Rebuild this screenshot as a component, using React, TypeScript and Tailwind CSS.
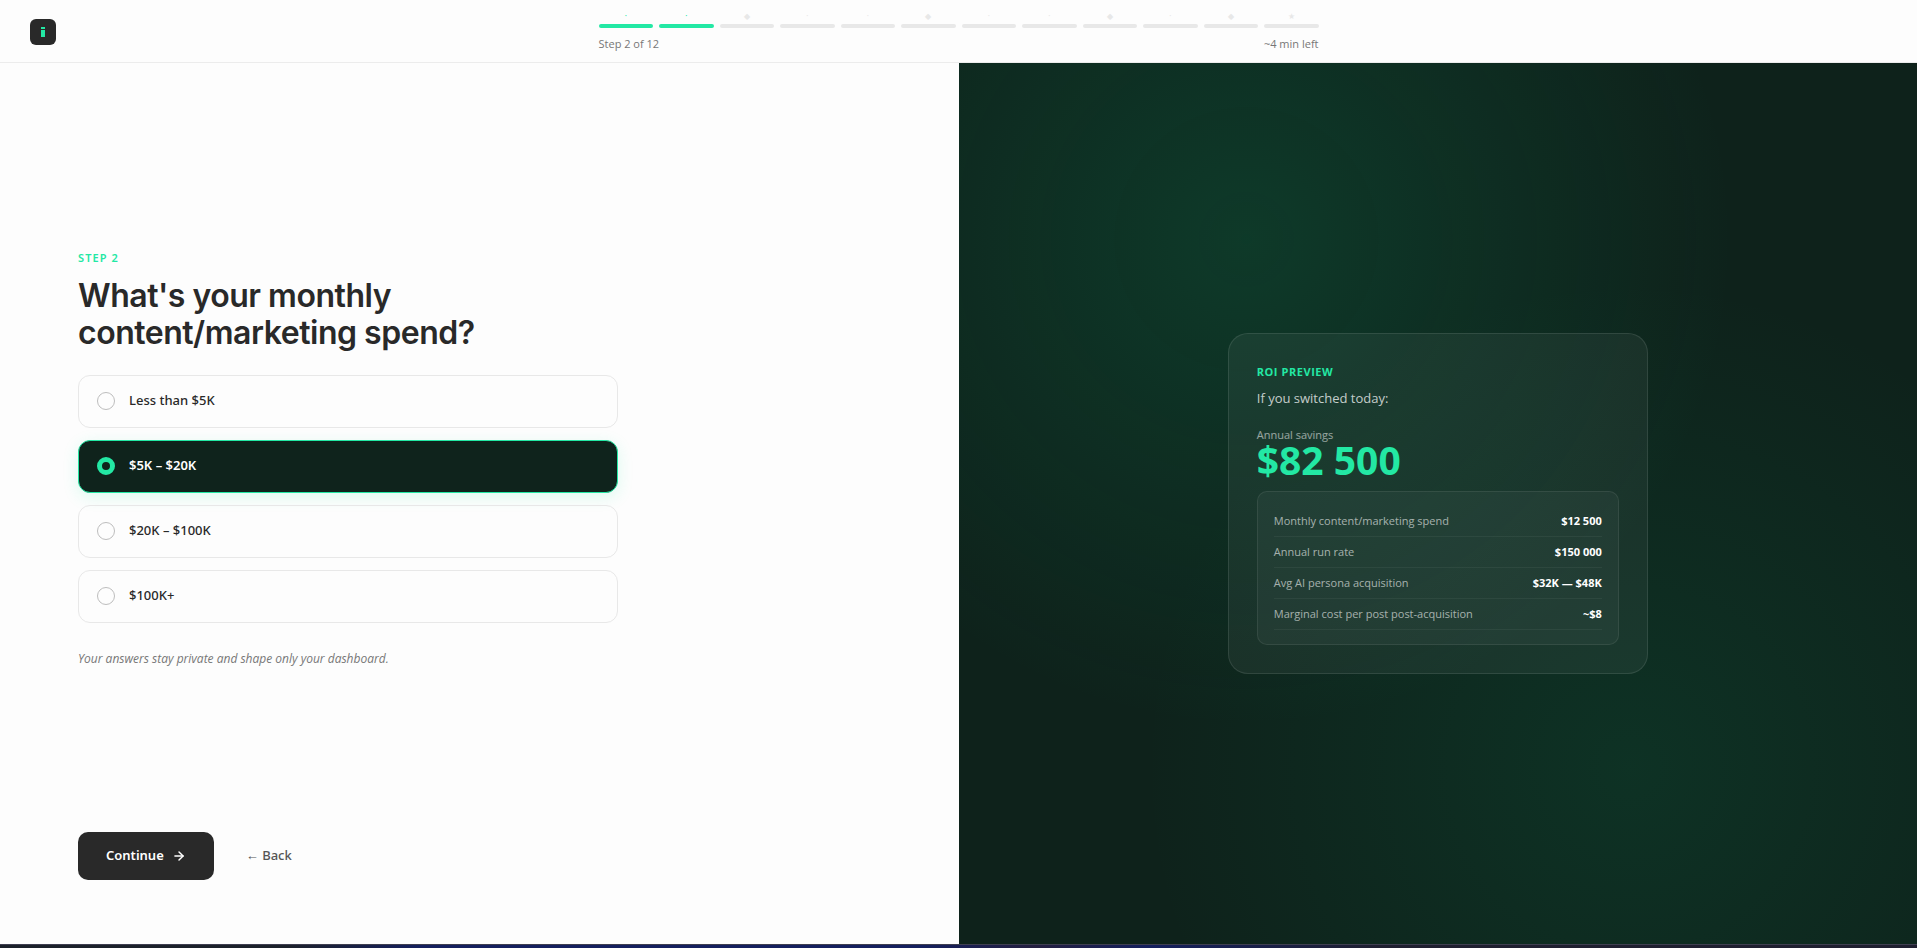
import { useState } from "react";
import { ArrowRight } from "lucide-react";

const STEP_MARKS = ["·", "·", "◆", "·", "·", "◆", "·", "·", "◆", "·", "◆", "★"];

const OPTIONS = ["Less than $5K", "$5K – $20K", "$20K – $100K", "$100K+"];

const ROI_ROWS = [
	{ label: "Monthly content/marketing spend", value: "$12 500" },
	{ label: "Annual run rate", value: "$150 000" },
	{ label: "Avg AI persona acquisition", value: "$32K — $48K" },
	{ label: "Marginal cost per post post-acquisition", value: "~$8" },
];

const Header = ({ current }: { current: number }) => (
	<header className="grid grid-cols-[1fr_720px_1fr] items-center border-b border-[#ececec] pt-3 pb-[10px]">
		<a
			href="#home"
			aria-label="Home"
			className="ml-[30px] flex size-[26px] items-center justify-center rounded-md bg-[#292929]">
			<svg viewBox="0 0 4 10" className="h-[10px] w-1" fill="#23e8a4">
				<rect width="4" height="2" />
				<rect y="3" width="4" height="7" />
			</svg>
		</a>
		<div>
			<div className="flex gap-[6px]">
				{STEP_MARKS.map((mark, i) => (
					<div key={i} className="flex-1">
						<div
							className={`flex h-3 items-center justify-center pb-1 text-[8px] leading-none ${
								i < current ? "text-[#23e8a4]" : "text-[#e8e8e8]"
							}`}>
							{mark}
						</div>
						<div
							className={`h-1 rounded-full ${
								i < current ? "bg-[#23e8a4]" : "bg-[#e8e8e8]"
							}`}></div>
					</div>
				))}
			</div>
			<div className="mt-2 flex justify-between font-['Open_Sans',sans-serif] text-[11px] leading-4 text-[#777]">
				<span>Step {current} of 12</span>
				<span>~4 min left</span>
			</div>
		</div>
	</header>
);

const RoiCard = () => (
	<section className="w-[420px] rounded-[20px] border border-white/10 bg-white/5 p-7 font-['Open_Sans',sans-serif]">
		<h2 className="text-[11px] leading-5 font-bold tracking-wider text-[#23e8a4]">
			ROI PREVIEW
		</h2>
		<p className="mt-[6px] text-[13px] leading-5 text-white/75">
			If you switched today:
		</p>
		<p className="mt-4 text-[11px] leading-[22px] text-white/55">
			Annual savings
		</p>
		<p className="text-[39px] leading-7 font-bold text-[#23e8a4]">$82 500</p>
		<div className="mt-[17px] rounded-[10px] border border-white/8 bg-white/4 px-4 py-[14px]">
			<table className="w-full text-[11px] leading-[14px]">
				<tbody>
					{ROI_ROWS.map((row) => (
						<tr key={row.label} className="h-[31px] border-b border-white/5">
							<th scope="row" className="text-left font-normal text-white/60">
								{row.label}
							</th>
							<td className="text-right font-bold text-white">{row.value}</td>
						</tr>
					))}
				</tbody>
			</table>
		</div>
	</section>
);

const App = () => {
	const [selected, setSelected] = useState(1);

	return (
		<div className="flex min-h-screen flex-col bg-[#fdfdfd] font-['Noto_Sans','Open_Sans',sans-serif] text-[#292929]">
			<Header current={2} />
			<main className="grid flex-1 grid-cols-2">
				<form className="flex flex-col px-[78px] pb-16">
					<div className="flex flex-1 flex-col justify-center pt-5">
						<p className="text-[11px] leading-[18px] font-semibold tracking-widest text-[#23e8a4]">
							STEP 2
						</p>
						<h1 className="mt-[10px] max-w-[540px] font-['Inter',sans-serif] text-[32px] leading-[37px] font-semibold tracking-[-0.015em]">
							What's your monthly content/marketing spend?
						</h1>
						<fieldset
							aria-label="Monthly spend"
							className="mt-6 flex max-w-[540px] flex-col gap-3">
							{OPTIONS.map((option, i) => (
								<label
									key={option}
									className={`flex h-[53px] cursor-pointer items-center gap-[14px] rounded-xl border px-[18px] text-[13px] ${
										selected === i
											? "border-[#23e8a4] bg-[#0f231c] font-semibold text-white shadow-[0_4px_16px_rgba(35,232,164,0.15)]"
											: "border-[#e8e8e8] font-medium"
									}`}>
									<input
										type="radio"
										name="spend"
										checked={selected === i}
										onChange={() => setSelected(i)}
										className="size-[18px] appearance-none rounded-full border border-[#bdbdbd] checked:border-[5px] checked:border-[#23e8a4]"
									/>
									{option}
								</label>
							))}
						</fieldset>
						<p className="mt-7 font-['Open_Sans',sans-serif] text-xs leading-4 text-[#777] italic">
							Your answers stay private and shape only your dashboard.
						</p>
					</div>
					<div className="flex items-center gap-8">
						<button
							type="button"
							className="flex h-12 items-center gap-2 rounded-[10px] bg-[#292929] px-7 text-[13px] font-semibold text-white">
							Continue
							<ArrowRight size={14} strokeWidth={2.5} />
						</button>
						<button type="button" className="text-[13px] font-medium text-[#555]">
							← Back
						</button>
					</div>
				</form>
				<aside className="flex items-center justify-center bg-[#0e221b] bg-[radial-gradient(circle_at_30%_20%,rgba(13,165,105,0.18),transparent_50%),radial-gradient(circle_at_70%_80%,rgba(13,165,105,0.12),transparent_50%)]">
					<RoiCard />
				</aside>
			</main>
			<footer className="h-1 border-t border-[#3f3f50] bg-[linear-gradient(90deg,#1c212b_15%,#141f5e_22%,#141f5e_48%,#241f40_54%,#141f5e_60%,#1f1f30_72%)]"></footer>
		</div>
	);
};

export default App;
